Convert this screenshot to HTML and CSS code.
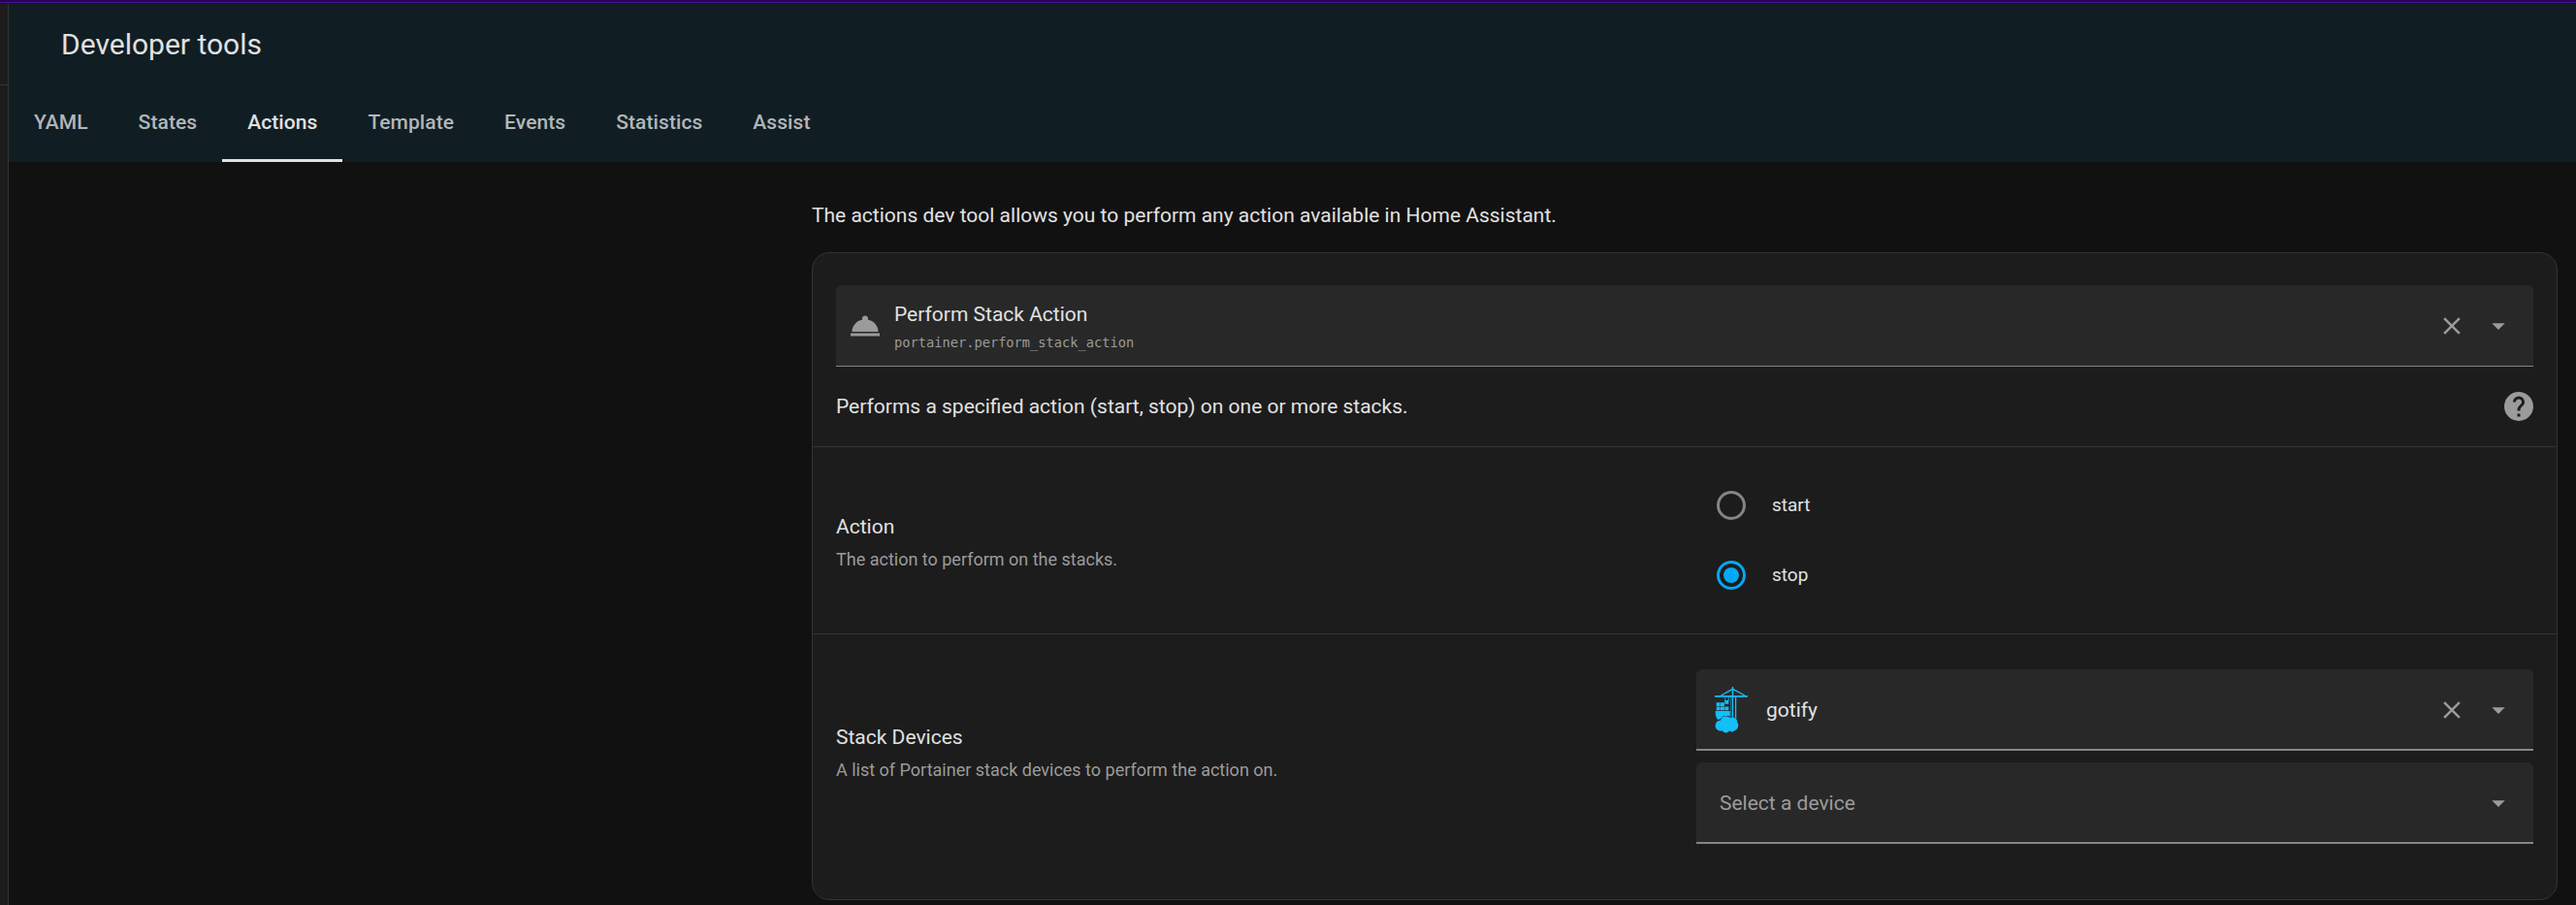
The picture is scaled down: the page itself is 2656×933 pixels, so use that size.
FILE: index.html
```html
<!DOCTYPE html>
<html lang="en">
<head>
<meta charset="utf-8">
<title>Developer tools</title>
<link rel="stylesheet" href="styles.css">
</head>
<body>
<div class="top-strip"></div>
<div class="app">
  <aside class="sidebar"><div class="sidebar-head"></div></aside>
  <div class="main">
    <header class="header">
      <h1 class="title">Developer tools</h1>
      <nav class="tabs">
        <a class="tab"><span>YAML</span></a>
        <a class="tab"><span>States</span></a>
        <a class="tab active"><span>Actions</span></a>
        <a class="tab"><span>Template</span></a>
        <a class="tab"><span>Events</span></a>
        <a class="tab"><span>Statistics</span></a>
        <a class="tab"><span>Assist</span></a>
      </nav>
    </header>
    <main class="content">
      <p class="intro">The actions dev tool allows you to perform any action available in Home Assistant.</p>
      <section class="card">
        <div class="picker action-picker">
          <svg class="icon lead" viewBox="0 0 24 24"><path d="M12 5A2 2 0 0 1 14 7C14 7.24 13.96 7.47 13.88 7.69C17.95 8.5 21 11.91 21 16H3C3 11.91 6.05 8.5 10.12 7.69C10.04 7.47 10 7.24 10 7A2 2 0 0 1 12 5M22 19H2V17H22V19Z"/></svg>
          <div class="picker-text">
            <span class="primary">Perform Stack Action</span>
            <span class="code">portainer.perform_stack_action</span>
          </div>
          <svg class="icon clear" viewBox="0 0 24 24"><path d="M19 6.41L17.59 5L12 10.59L6.41 5L5 6.41L10.59 12L5 17.59L6.41 19L12 13.41L17.59 19L19 17.59L13.41 12L19 6.41Z"/></svg>
          <svg class="icon arrow" viewBox="0 0 24 24"><path d="M7 10L12 15L17 10H7Z"/></svg>
        </div>
        <div class="description">
          <span>Performs a specified action (start, stop) on one or more stacks.</span>
          <svg class="icon help" viewBox="0 0 24 24"><path d="M15.07 11.25L14.17 12.17C13.45 12.89 13 13.5 13 15H11V14.5C11 13.39 11.45 12.39 12.17 11.67L13.41 10.41C13.78 10.05 14 9.55 14 9A2 2 0 0 0 12 7A2 2 0 0 0 10 9H8A4 4 0 0 1 12 5A4 4 0 0 1 16 9C16 9.88 15.64 10.67 15.07 11.25M13 19H11V17H13M12 2A10 10 0 0 0 2 12A10 10 0 0 0 12 22A10 10 0 0 0 22 12C22 6.47 17.5 2 12 2Z"/></svg>
        </div>
        <div class="row action-row">
          <div class="label">
            <span class="heading">Action</span>
            <span class="secondary">The action to perform on the stacks.</span>
          </div>
          <div class="control radios">
            <label class="option"><i class="radio"></i><span>start</span></label>
            <label class="option"><i class="radio checked"></i><span>stop</span></label>
          </div>
        </div>
        <div class="row devices-row">
          <div class="label">
            <span class="heading">Stack Devices</span>
            <span class="secondary">A list of Portainer stack devices to perform the action on.</span>
          </div>
          <div class="control devices">
            <div class="picker">
              <svg class="logo" viewBox="0 0 36 50">
                <g fill="none" stroke="#13bef9">
                  <path d="M1 10.8H35" stroke-width="1.8"/>
                  <path d="M19.5 1V10" stroke-width="1.5"/>
                  <path d="M7.5 10L19.5 3.4L32 10" stroke-width="1.4"/>
                  <path d="M19.5 11V33M22.6 11V34" stroke-width="1.3"/>
                  <path d="M17.8 11V33" stroke-width=".6"/>
                  <path d="M11.7 11.5V15.5M15.2 11.5V15.5" stroke-width=".8"/>
                </g>
                <g fill="#13bef9">
                  <path d="M11.3 15H15.3V18.8H11.3ZM2.7 17.3H6.6V21H2.7ZM7 17.3H10.9V21H7ZM2.7 21.4H6.6V25.3H2.7ZM7 21.4H10.9V25.3H7ZM11.3 21.4H15.3V25.3H11.3Z"/>
                  <path d="M1.8 25.9H16.8V31.5C14 30.8 10.5 31 8 33C6.8 34.5 5.2 34.8 4 35C2.2 32.2 1.2 29 1.8 25.9Z"/>
                  <path d="M8 33.3C10 31 14.5 30.9 16.9 33C20 31.6 24.5 33.4 24.2 37.6C26.5 40.5 25 45.5 21.3 46.2C19.6 48 17.5 47.6 16.3 46.6C13.5 49.5 10.3 48.8 8.6 46.3C4.5 47.3 1.3 44 1.6 40.8C1.8 37.6 4.3 35.6 7 35.9C7 34.8 7.4 34 8 33.3Z" stroke="#282828" stroke-width=".8" paint-order="stroke"/>
                </g>
              </svg>
              <span class="value">gotify</span>
              <svg class="icon clear" viewBox="0 0 24 24"><path d="M19 6.41L17.59 5L12 10.59L6.41 5L5 6.41L10.59 12L5 17.59L6.41 19L12 13.41L17.59 19L19 17.59L13.41 12L19 6.41Z"/></svg>
              <svg class="icon arrow" viewBox="0 0 24 24"><path d="M7 10L12 15L17 10H7Z"/></svg>
            </div>
            <div class="picker">
              <span class="value placeholder">Select a device</span>
              <svg class="icon arrow" viewBox="0 0 24 24"><path d="M7 10L12 15L17 10H7Z"/></svg>
            </div>
          </div>
        </div>
      </section>
    </main>
  </div>
</div>
</body>
</html>
```

FILE: styles.css
```css
* { box-sizing: border-box; }
body {
  margin: 0;
  height: 933px;
  overflow: hidden;
  display: flex;
  flex-direction: column;
  background: #111111;
  color: #e1e1e1;
  font-family: Roboto, "Liberation Sans", sans-serif;
  font-size: 21px;
  line-height: 30px;
}
.top-strip {
  height: 4px;
  flex: none;
  background: linear-gradient(#260058 0 2px, #47158a 2px 3px, #1c0a3c 3px 4px);
}
.app { display: flex; flex: 1; min-height: 0; }
.sidebar { width: 9px; flex: none; background: #1c1c1c; border-right: 1px solid #333333; }
.sidebar-head { height: 84px; border-bottom: 1px solid #333333; }
.main { flex: 1; min-width: 0; }
.header { height: 163px; background: #101e24; }
.title { margin: 0; padding: 0 54px; height: 84px; line-height: 84px; font-size: 30px; font-weight: 400; }
.tabs { display: flex; height: 79px; }
.tab {
  display: flex;
  align-items: center;
  padding: 0 26px;
  border-bottom: 3px solid transparent;
  font-weight: 500;
  letter-spacing: 0.08px;
  color: #b2b6b8;
}
.tab.active { color: #e1e1e1; border-bottom-color: #e1e1e1; }
.content { padding: 40px 19px 0 828px; }
.intro { margin: 0 0 23px; }
.card {
  height: 668px;
  border: 1px solid #333333;
  border-radius: 18px;
  background: #1c1c1c;
  padding-top: 33px;
}
.picker {
  display: flex;
  align-items: center;
  height: 84px;
  padding-right: 18px;
  background: #282828;
  border-radius: 6px 6px 0 0;
  box-shadow: inset 0 -2px #858585;
}
.action-picker { margin: 0 24px; box-shadow: inset 0 -1px #858585; }
.icon { width: 36px; height: 36px; flex: none; fill: #9b9b9b; }
.lead { margin-left: 12px; }
.picker-text { flex: 1; margin-left: 12px; padding-top: 5px; display: flex; flex-direction: column; }
.code { font: 13.7px/29px "DejaVu Sans Mono", monospace; color: #9b9b9b; }
.clear { width: 30px; height: 30px; margin-right: 15px; }
.arrow { width: 32px; height: 32px; margin: 0 2px; }
.description { display: flex; align-items: center; justify-content: space-between; height: 82px; padding: 0 21px 0 24px; }
.row { border-top: 1px solid #333333; padding: 0 24px; display: flex; justify-content: space-between; align-items: center; }
.action-row { height: 193px; padding-bottom: 24px; }
.devices-row { height: 273px; align-items: flex-start; }
.label { display: flex; flex-direction: column; gap: 5px; }
.action-row .label { padding-top: 27px; }
.devices-row .label { padding-top: 91px; }
.secondary { font-size: 18px; line-height: 27px; color: #9b9b9b; }
.control { width: 863px; }
.radios { padding: 24px 0 0 21px; }
.option { display: flex; align-items: center; height: 72px; gap: 27px; font-size: 19px; }
.radio { width: 30px; height: 30px; border: 3px solid #858585; border-radius: 50%; display: grid; place-items: center; }
.radio.checked { border-color: #03a9f4; }
.radio.checked::after { content: ""; width: 16px; height: 16px; border-radius: 50%; background: #03a9f4; }
.devices { display: flex; flex-direction: column; gap: 12px; padding-top: 36px; }
.logo { width: 36px; height: 50px; margin-left: 18px; flex: none; }
.value { flex: 1; margin-left: 18px; }
.value.placeholder { margin-left: 24px; color: #9b9b9b; }
```
